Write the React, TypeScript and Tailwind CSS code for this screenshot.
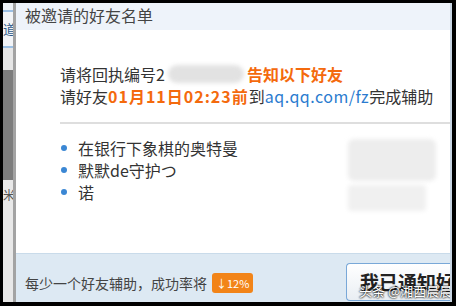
import React from "react";

const font = { fontFamily: '"Noto Sans CJK SC", "Liberation Sans", sans-serif' };

const friends = ["在银行下象棋的奥特曼", "默默de守护つ", "诺"];

export default function App() {
  return (
    <div
      className="flex h-[306px] w-[456px] bg-black pt-[3px] pb-[4px] pl-[3px] pr-[4px] text-[#333]"
      style={font}
    >
      {/* window behind the dialog */}
      <div className="flex w-[10px] flex-col bg-[#dcdcdc]">
        <div className="h-[7px] bg-[#eef2f7]" />
        <div className="h-[2px] bg-[#9cc0e4]" />
        <div className="h-[34px] overflow-hidden bg-[#f2f4f7] text-[13px] leading-[34px] text-[#2d5a8a]">
          道
        </div>
        <div className="h-[2px] bg-[#9cc0e4]" />
        <div className="h-[22px] bg-[#e6e6e6]" />
        <div className="h-[110px] bg-[#7d7d7d]" />
        <div className="h-[30px] overflow-hidden bg-[#e8e8e8] text-[12px] leading-[30px] text-[#555]">
          米
        </div>
        <div className="flex-1 bg-[#e8e8e8]" />
      </div>
      <div className="w-[3px] bg-[#a3a3a3]" />

      {/* dialog */}
      <div className="flex flex-1 flex-col border-r-2 border-[#c9d6e3] bg-white">
        <div className="h-[27px] bg-[#eef3fa] pl-[9px] text-[16px] leading-[24px] text-[#444]">
          被邀请的好友名单
        </div>

        <div className="flex flex-1 flex-col pl-[44px] pt-[33px]">
          <div className="flex items-center text-[16px] leading-[22px]">
            <span>请将回执编号2</span>
            <span className="mx-[3px] h-[18px] w-[76px] rounded-full bg-[#e2e2e2] blur-[2px]" />
            <span className="font-bold text-[#f46a0d]">告知以下好友</span>
          </div>
          <div className="flex items-center text-[16px] leading-[22px]">
            <span>请好友</span>
            <span className="font-bold tracking-[1px] text-[#f46a0d]">01月11日02:23前</span>
            <span>到</span>
            <span className="tracking-[0.5px] text-[#2a7bcf]">aq.qq.com/fz</span>
            <span>完成辅助</span>
          </div>

          <div className="mt-[15px] h-[2px] bg-[#dedede]" />

          <div className="mt-[13px] flex">
            <ul className="flex flex-col">
              {friends.map((name) => (
                <li key={name} className="flex items-center gap-[11px] text-[16px] leading-[22px]">
                  <span className="ml-[1px] h-[6px] w-[6px] rounded-full bg-[#3b87d4]" />
                  <span>{name}</span>
                </li>
              ))}
            </ul>
            <div className="ml-auto mr-[14px] mt-[2px] flex flex-col gap-[4px]">
              <div className="h-[42px] w-[88px] rounded-[6px] bg-[#ededed] blur-[2px]" />
              <div className="h-[26px] w-[78px] rounded-[4px] bg-[#f0f0f0] blur-[2px]" />
            </div>
          </div>
        </div>

        <div className="flex h-[49px] items-end border-t border-[#c9dbea] bg-[#dde9f3] pl-[9px]">
          <div className="mb-[9px] flex items-center">
            <span className="text-[14px] leading-[20px] text-[#444]">每少一个好友辅助，成功率将</span>
            <span className="ml-[5px] flex h-[20px] items-center rounded-[3px] bg-[#f28418] px-[4px] text-[11px] leading-[20px] text-white">
              ↓12%
            </span>
          </div>
          <div className="relative mb-[1px] ml-auto flex h-[38px] w-[104px] items-center overflow-hidden rounded-l-[4px] border border-r-0 border-[#79a8d8] bg-gradient-to-b from-white to-[#e9eef3] pl-[13px]">
            <span className="whitespace-nowrap text-[19px] font-bold text-[#222]">我已通知好友</span>
            <span
              className="absolute left-[12px] top-[19px] whitespace-nowrap text-[13px] leading-[16px] text-white"
              style={{ textShadow: "0 0 2px #000, 0 0 2px #000" }}
            >
              头条 @湘西晨晨
            </span>
          </div>
        </div>
      </div>
    </div>
  );
}
